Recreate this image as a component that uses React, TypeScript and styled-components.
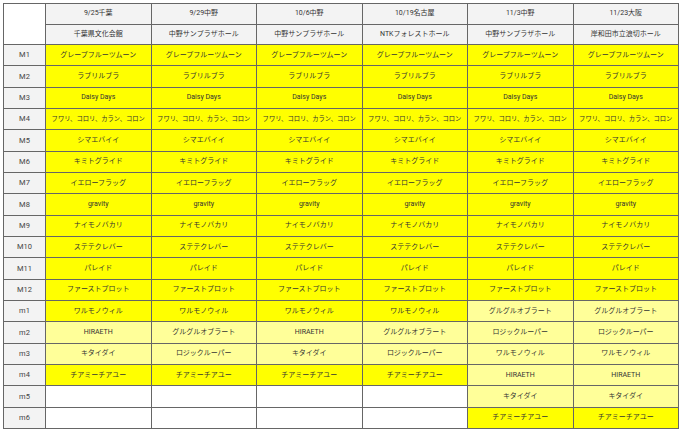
import styled, { createGlobalStyle } from 'styled-components';

const GlobalStyle = createGlobalStyle`
  html, body {
    margin: 0;
    padding: 0;
    background: #ffffff;
  }
  body {
    font-family: Roboto, "Noto Sans CJK JP", sans-serif;
    color: #333333;
  }
`;

type Tone = 'bright' | 'pale' | 'none';

interface Show {
  date: string;
  venue: string;
}

const shows: Show[] = [
  { date: '9/25千葉', venue: '千葉県文化会館' },
  { date: '9/29中野', venue: '中野サンプラザホール' },
  { date: '10/6中野', venue: '中野サンプラザホール' },
  { date: '10/19名古屋', venue: 'NTKフォレストホール' },
  { date: '11/3中野', venue: '中野サンプラザホール' },
  { date: '11/23大阪', venue: '岸和田市立浪切ホール' },
];

const mainSongs = [
  'グレープフルーツムーン',
  'ラブリルブラ',
  'Daisy Days',
  'フワリ、コロリ、カラン、コロン',
  'シマエバイイ',
  'キミトグライド',
  'イエローフラッグ',
  'gravity',
  'ナイモノバカリ',
  'ステテクレバー',
  'パレイド',
  'ファーストプロット',
];

// [song, tone] per show for the mini set
const miniRows: [string, Tone][][] = [
  [
    ['ワルモノウィル', 'bright'],
    ['ワルモノウィル', 'bright'],
    ['ワルモノウィル', 'bright'],
    ['ワルモノウィル', 'bright'],
    ['グルグルオブラート', 'pale'],
    ['グルグルオブラート', 'pale'],
  ],
  [
    ['HIRAETH', 'pale'],
    ['グルグルオブラート', 'pale'],
    ['HIRAETH', 'pale'],
    ['グルグルオブラート', 'pale'],
    ['ロジックルーパー', 'pale'],
    ['ロジックルーパー', 'pale'],
  ],
  [
    ['キタイダイ', 'pale'],
    ['ロジックルーパー', 'pale'],
    ['キタイダイ', 'pale'],
    ['ロジックルーパー', 'pale'],
    ['ワルモノウィル', 'pale'],
    ['ワルモノウィル', 'pale'],
  ],
  [
    ['チアミーチアユー', 'bright'],
    ['チアミーチアユー', 'bright'],
    ['チアミーチアユー', 'bright'],
    ['チアミーチアユー', 'bright'],
    ['HIRAETH', 'pale'],
    ['HIRAETH', 'pale'],
  ],
  [
    ['', 'none'],
    ['', 'none'],
    ['', 'none'],
    ['', 'none'],
    ['キタイダイ', 'pale'],
    ['キタイダイ', 'pale'],
  ],
  [
    ['', 'none'],
    ['', 'none'],
    ['', 'none'],
    ['', 'none'],
    ['チアミーチアユー', 'bright'],
    ['チアミーチアユー', 'bright'],
  ],
];

const toneColor: Record<Tone, string> = {
  bright: '#ffff00',
  pale: '#ffff99',
  none: '#ffffff',
};

const App = () => {
  return (
    <>
      <GlobalStyle />
      <Page>
        <Table>
          <colgroup>
            <col style={{ width: 42 }} />
            {shows.map((s) => (
              <col key={s.date} />
            ))}
          </colgroup>
          <thead>
            <HeadRow>
              <Corner rowSpan={2} />
              {shows.map((s) => (
                <HeadCell key={s.date}>{s.date}</HeadCell>
              ))}
            </HeadRow>
            <HeadRow>
              {shows.map((s) => (
                <HeadCell key={s.date}>{s.venue}</HeadCell>
              ))}
            </HeadRow>
          </thead>
          <tbody>
            {mainSongs.map((song, i) => (
              <BodyRow key={song}>
                <Label>M{i + 1}</Label>
                {shows.map((s) => (
                  <Song key={s.date} $tone="bright" $long={song.length > 12}>
                    {song}
                  </Song>
                ))}
              </BodyRow>
            ))}
            {miniRows.map((row, i) => (
              <BodyRow key={'m' + i}>
                <Label>m{i + 1}</Label>
                {row.map(([song, tone], j) => (
                  <Song key={j} $tone={tone} $long={false}>
                    {song}
                  </Song>
                ))}
              </BodyRow>
            ))}
          </tbody>
        </Table>
      </Page>
    </>
  );
};

export default App;

const Page = styled.div`
  padding: 3px 1px 0 3px;
`;

const Table = styled.table`
  width: 676px;
  table-layout: fixed;
  border-collapse: collapse;
  border: 1px solid #555;
  font-size: 7px;
`;

const HeadRow = styled.tr`
  height: 20.5px;
`;

const BodyRow = styled.tr`
  height: 21.33px;
`;

const Cell = styled.td`
  border: 1px solid #666;
  padding: 0 2px;
  text-align: center;
  vertical-align: middle;
  white-space: nowrap;
  overflow: hidden;
  line-height: 1;
`;

const Corner = styled(Cell)`
  background: #ffffff;
`;

const HeadCell = styled(Cell).attrs({ as: 'th' })`
  background: #f3f3f3;
  font-weight: 400;
  color: #333;
`;

const Label = styled(Cell)`
  background: #f3f3f3;
  font-size: 7.5px;
  color: #444;
`;

const Song = styled(Cell)<{ $tone: Tone; $long: boolean }>`
  background: ${(p) => toneColor[p.$tone]};
  color: #333;
  font-size: ${(p) => (p.$long ? '6.3px' : '7px')};
`;
